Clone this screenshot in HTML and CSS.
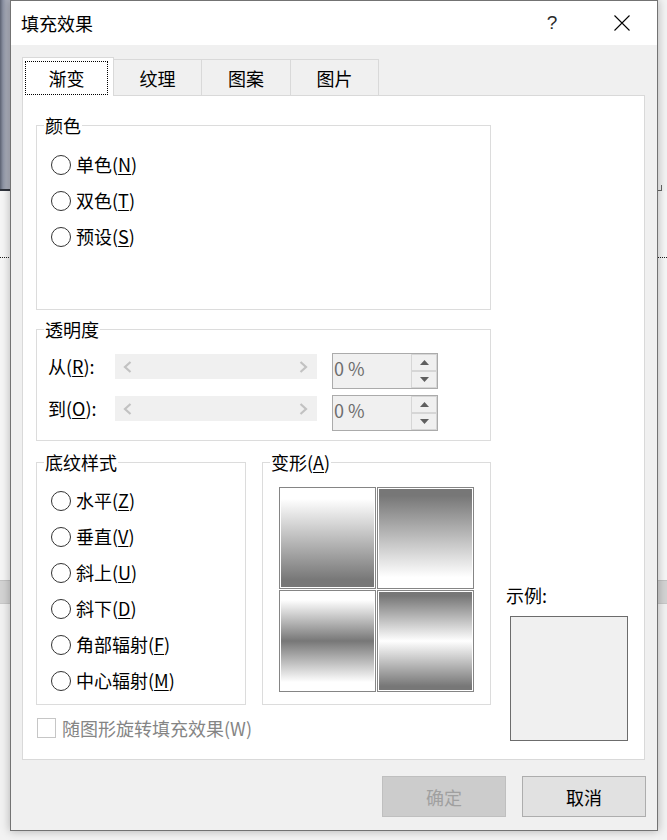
FILE: index.html
```html
<!DOCTYPE html>
<html lang="zh-CN">
<head>
<meta charset="utf-8">
<title>填充效果</title>
<link rel="stylesheet" href="styles.css">
</head>
<body>
<div class="strip strip-left">
  <div class="photo"></div>
  <div class="photo-edge"></div>
  <div class="blank blank-a"></div>
  <div class="dots"></div>
  <div class="blank blank-b"></div>
  <div class="band"></div>
  <div class="blank blank-c"></div>
</div>

<div class="dialog">
  <div class="titlebar">
    <div class="title">填充效果</div>
    <div class="tb-btn help">?</div>
    <div class="tb-btn close">
      <svg width="16" height="16" viewBox="0 0 16 16"><path d="M0.5 0.5 L15.5 15.5 M15.5 0.5 L0.5 15.5" stroke="#000" stroke-width="1.1" fill="none"/></svg>
    </div>
  </div>

  <div class="dlg-body">
    <div class="tabs">
      <div class="tab active"><div class="focus">渐变</div></div>
      <div class="tab tab-w89">纹理</div>
      <div class="tab tab-w90">图案</div>
      <div class="tab tab-w89">图片</div>
    </div>

    <div class="panel">
      <div class="left-col">
        <fieldset class="group g-color">
          <legend>颜色</legend>
          <div class="radios radios-color">
            <div class="radio-row"><span class="radio"></span><span class="rl">单色(<u>N</u>)</span></div>
            <div class="radio-row"><span class="radio"></span><span class="rl">双色(<u>T</u>)</span></div>
            <div class="radio-row"><span class="radio"></span><span class="rl">预设(<u>S</u>)</span></div>
          </div>
        </fieldset>

        <fieldset class="group g-trans">
          <legend>透明度</legend>
          <div class="trans-rows">
            <div class="trans-row">
              <span class="trans-label">从(<u>R</u>):</span>
              <div class="slider">
                <svg width="9" height="12" viewBox="0 0 9 12"><polyline points="7.5,1 2,6 7.5,11" fill="none" stroke="#c2c2c2" stroke-width="2.2"/></svg>
                <svg width="9" height="12" viewBox="0 0 9 12"><polyline points="1.5,1 7,6 1.5,11" fill="none" stroke="#c2c2c2" stroke-width="2.2"/></svg>
              </div>
              <div class="spin">
                <div class="spin-val">0 %</div>
                <div class="spin-btns">
                  <div class="spin-btn"><svg width="9" height="5" viewBox="0 0 9 5"><polygon points="4.5,0 9,5 0,5" fill="#5f5f5f"/></svg></div>
                  <div class="spin-btn"><svg width="9" height="5" viewBox="0 0 9 5"><polygon points="0,0 9,0 4.5,5" fill="#5f5f5f"/></svg></div>
                </div>
              </div>
            </div>
            <div class="trans-row row-2">
              <span class="trans-label">到(<u>O</u>):</span>
              <div class="slider">
                <svg width="9" height="12" viewBox="0 0 9 12"><polyline points="7.5,1 2,6 7.5,11" fill="none" stroke="#c2c2c2" stroke-width="2.2"/></svg>
                <svg width="9" height="12" viewBox="0 0 9 12"><polyline points="1.5,1 7,6 1.5,11" fill="none" stroke="#c2c2c2" stroke-width="2.2"/></svg>
              </div>
              <div class="spin">
                <div class="spin-val">0 %</div>
                <div class="spin-btns">
                  <div class="spin-btn"><svg width="9" height="5" viewBox="0 0 9 5"><polygon points="4.5,0 9,5 0,5" fill="#5f5f5f"/></svg></div>
                  <div class="spin-btn"><svg width="9" height="5" viewBox="0 0 9 5"><polygon points="0,0 9,0 4.5,5" fill="#5f5f5f"/></svg></div>
                </div>
              </div>
            </div>
          </div>
        </fieldset>

        <div class="pair">
          <fieldset class="group g-shade">
            <legend>底纹样式</legend>
            <div class="radios radios-shade">
              <div class="radio-row"><span class="radio"></span><span class="rl">水平(<u>Z</u>)</span></div>
              <div class="radio-row"><span class="radio"></span><span class="rl">垂直(<u>V</u>)</span></div>
              <div class="radio-row"><span class="radio"></span><span class="rl">斜上(<u>U</u>)</span></div>
              <div class="radio-row"><span class="radio"></span><span class="rl">斜下(<u>D</u>)</span></div>
              <div class="radio-row"><span class="radio"></span><span class="rl">角部辐射(<u>F</u>)</span></div>
              <div class="radio-row"><span class="radio"></span><span class="rl">中心辐射(<u>M</u>)</span></div>
            </div>
          </fieldset>
          <fieldset class="group g-variant">
            <legend>变形(<u>A</u>)</legend>
            <div class="swatches">
              <div class="sw sw1"></div>
              <div class="sw sw2"></div>
              <div class="sw sw3"></div>
              <div class="sw sw4"></div>
            </div>
          </fieldset>
        </div>

        <div class="check-row"><span class="checkbox"></span><span>随图形旋转填充效果(W)</span></div>
      </div>

      <div class="right-col">
        <div class="sample-label">示例:</div>
        <div class="sample-box"></div>
      </div>
    </div>

    <div class="buttons">
      <div class="btn disabled">确定</div>
      <div class="btn">取消</div>
    </div>
  </div>
</div>

<div class="strip strip-right">
  <div class="blank blank-r1"></div>
  <div class="mark"></div>
  <div class="blank blank-r2"></div>
  <div class="dots"></div>
  <div class="blank blank-b"></div>
  <div class="band"></div>
  <div class="blank blank-c"></div>
</div>
</body>
</html>
```

FILE: styles.css
```css
* { box-sizing: border-box; }

html, body {
  margin: 0;
  padding: 0;
}

body {
  width: 667px;
  height: 840px;
  overflow: hidden;
  display: flex;
  align-items: flex-start;
  background: #f3f3f3;
  font-family: "Noto Sans CJK SC", "Noto Sans", sans-serif;
  font-size: 18px;
  color: #000;
}

u {
  text-decoration-thickness: 1px;
  text-underline-offset: 2px;
}

/* ---------- backdrop strips ---------- */
.strip {
  height: 840px;
  display: flex;
  flex-direction: column;
  flex-shrink: 0;
}
.strip-left { width: 10px; }
.strip-right { width: 9px; }

.photo {
  height: 189px;
  background: linear-gradient(to right, #5c6272 0, #8c92a3 3px, #a6aab7 6px, #b0b3bf 10px);
}
.photo-edge { height: 2px; background: #2f333c; }
.blank { background: #f6f6f6; }
.blank-a { height: 66px; }
.blank-b { height: 322px; }
.blank-c { flex: 1; background: #f2f2f2; }
.blank-r1 { height: 185px; background: #f3f3f3; }
.blank-r2 { height: 66px; }
.mark {
  height: 6px;
  width: 4px;
  border-right: 1px solid #666;
  border-bottom: 1px solid #666;
}
.dots {
  height: 1px;
  background: repeating-linear-gradient(to right, #222 0 1px, transparent 1px 2px);
}
.band {
  height: 24px;
  background: #d3d3d3;
  border-top: 1px solid #c2c2c2;
  border-bottom: 1px solid #c8c8c8;
}

/* ---------- dialog ---------- */
.dialog {
  width: 648px;
  height: 831px;
  flex-shrink: 0;
  border: 1px solid #737373;
  background: #f0f0f0;
  display: flex;
  flex-direction: column;
  position: relative;
  z-index: 1;
  box-shadow: 0 0 9px rgba(0, 0, 0, 0.28);
}

.titlebar {
  height: 44px;
  flex-shrink: 0;
  background: #fff;
  display: flex;
  align-items: center;
}
.title {
  flex: 1;
  padding-left: 10px;
  line-height: 24px;
}
.tb-btn {
  width: 70px;
  height: 44px;
  display: flex;
  align-items: center;
  justify-content: center;
}
.help {
  font-family: "Liberation Sans", "DejaVu Sans", sans-serif;
  font-size: 19px;
  color: #2a2a2a;
}

.dlg-body {
  flex: 1;
  display: flex;
  flex-direction: column;
  padding: 12px 11px 13px 11px;
}

/* tabs */
.tabs {
  display: flex;
  align-items: flex-end;
  height: 39px;
}
.tab {
  height: 37px;
  margin-left: -1px;
  border: 1px solid #d9d9d9;
  border-bottom: none;
  background: #f0f0f0;
  display: flex;
  align-items: center;
  justify-content: center;
  line-height: 22px;
}
.tab-w89 { width: 89px; }
.tab-w90 { width: 90px; }
.tab.active {
  width: 92px;
  height: 39px;
  margin-left: 0;
  background: #fff;
  padding: 3px 5px 1px 2px;
  position: relative;
  z-index: 1;
}
.focus {
  flex: 1;
  align-self: stretch;
  border: 1px dotted #000;
  display: flex;
  align-items: center;
  justify-content: center;
}

/* panel */
.panel {
  width: 623px;
  height: 665px;
  margin-top: -1px;
  border: 1px solid #d9d9d9;
  background: #fff;
  display: flex;
}
.left-col {
  width: 455px;
  margin-left: 13px;
  display: flex;
  flex-direction: column;
}
.right-col {
  margin-left: 15px;
  display: flex;
  flex-direction: column;
  justify-content: flex-end;
  padding-bottom: 18px;
}

fieldset.group {
  margin: 0;
  padding: 0;
  min-width: 0;
  border: 1px solid #dcdcdc;
}
fieldset.group legend {
  padding: 0 1px;
  margin-left: 7px;
  line-height: 21px;
  font-size: 18px;
}

fieldset.g-color { margin-top: 19px; }
fieldset.g-trans { margin-top: 9px; }

.radios-color { padding: 11px 0 54px 14px; }
.radios-shade { padding: 10px 0 5px 14px; }

.radio-row {
  height: 36px;
  display: flex;
  align-items: center;
  line-height: 24px;
}
.rl { padding-bottom: 2px; }
.radio {
  width: 20px;
  height: 20px;
  border: 1px solid #333;
  border-radius: 50%;
  background: #fff;
  margin-right: 5px;
  flex-shrink: 0;
}

/* transparency */
.trans-rows { padding: 13px 0 9px 11px; }
.trans-row {
  display: flex;
  align-items: flex-start;
  height: 36px;
}
.row-2 { margin-top: 6px; }
.trans-label {
  width: 67px;
  height: 25px;
  margin-top: 1px;
  line-height: 24px;
}
.slider {
  width: 202px;
  height: 25px;
  margin-top: 1px;
  background: #f0f0f0;
  display: flex;
  align-items: center;
  justify-content: space-between;
  padding: 0 9px 0 8px;
}
.spin {
  width: 106px;
  height: 36px;
  margin-left: 15px;
  border: 1px solid #ababab;
  background: #fff;
  display: flex;
}
.spin-val {
  width: 78px;
  background: #f0f0f0;
  color: #6d6d6d;
  padding-left: 1px;
  line-height: 29px;
}
.spin-btns {
  width: 26px;
  display: flex;
  flex-direction: column;
}
.spin-btn {
  height: 17px;
  border: 1px solid #d6d6d6;
  background: #f0f0f0;
  display: flex;
  align-items: center;
  justify-content: center;
}

/* pattern + variants */
.pair {
  display: flex;
  gap: 16px;
  margin-top: 11px;
}
fieldset.g-shade { width: 210px; }
fieldset.g-variant { width: 229px; }

.swatches {
  padding: 14px 0 0 16px;
  display: grid;
  grid-template-columns: 97px 97px;
  grid-template-rows: 102px 102px;
  gap: 1px;
}
.sw {
  border: 1px solid #858585;
  padding: 1px;
}
.sw1 { background: linear-gradient(#ffffff 10%, #777777 93%) content-box, #fff; }
.sw2 { background: linear-gradient(#777777 7%, #ffffff 90%) content-box, #fff; }
.sw3 { background: linear-gradient(#ffffff 8%, #777777 50%, #ffffff 92%) content-box, #fff; }
.sw4 { background: linear-gradient(#777777 4%, #ffffff 50%, #777777 96%) content-box, #fff; }

/* checkbox */
.check-row {
  display: flex;
  align-items: center;
  margin-top: 13px;
  margin-left: 1px;
  line-height: 20px;
  color: #858585;
}
.checkbox {
  width: 19px;
  height: 20px;
  border: 1px solid #c6c6c6;
  background: #fff;
  margin-right: 6px;
}

/* sample */
.sample-label { line-height: 21px; }
.sample-box {
  width: 118px;
  height: 125px;
  margin-top: 10px;
  margin-left: 4px;
  border: 1px solid #6c6c6c;
  background: #f0f0f0;
}

/* buttons */
.buttons {
  display: flex;
  justify-content: flex-end;
  gap: 16px;
  margin-top: 16px;
}
.btn {
  width: 124px;
  height: 41px;
  border: 1px solid #adadad;
  background: #e1e1e1;
  display: flex;
  align-items: center;
  justify-content: center;
}
.btn.disabled {
  background: #cccccc;
  border-color: #bfbfbf;
  color: #a0a0a0;
}
```
